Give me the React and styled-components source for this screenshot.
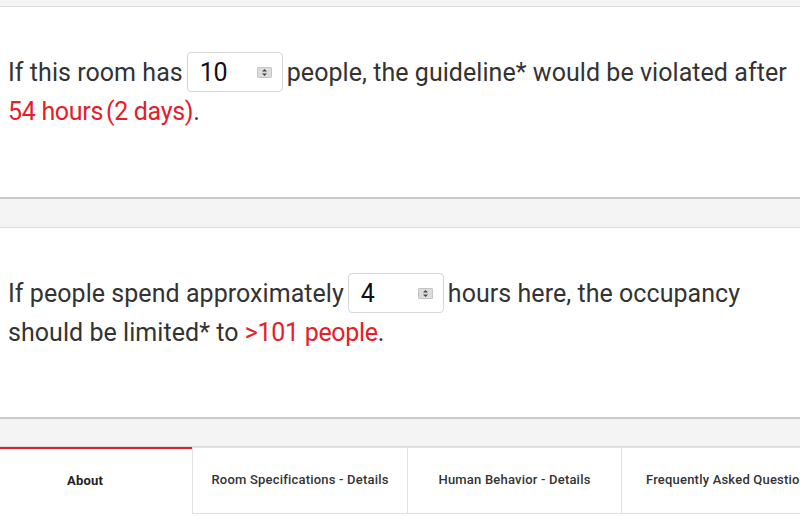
import React from "react";
import styled, { createGlobalStyle } from "styled-components";

const Global = createGlobalStyle`
  html, body { margin: 0; padding: 0; background: #fff; }
  body { font-family: Roboto, "Noto Sans", sans-serif; color: #333; overflow: hidden; }
`;

const Page = styled.div`
  width: 800px;
  height: 519px;
  display: flex;
  flex-direction: column;
  overflow: hidden;
`;

const Strip = styled.div`
  height: ${(p) => p.$h}px;
  background: #f4f4f4;
  border-top: ${(p) => (p.$top ? "2px solid #c9c9c9" : "none")};
  border-bottom: 1px solid #dcdcdc;
  flex-shrink: 0;
`;

const Panel = styled.section`
  height: ${(p) => p.$h}px;
  background: #fff;
  padding: 46px 0 0 8px;
  box-sizing: border-box;
  flex-shrink: 0;
`;

const Sentence = styled.p`
  margin: 0;
  font-size: 25px;
  line-height: 39px;
  letter-spacing: 0.05px;
  color: #333;
  width: 790px;
`;

const Red = styled.span`
  color: #e3202a;
  letter-spacing: -0.3px;
`;

const NumberBox = styled.span`
  display: inline-flex;
  align-items: center;
  justify-content: space-between;
  box-sizing: border-box;
  width: 96px;
  height: 40px;
  vertical-align: middle;
  margin: -4px 4px 0 4px;
  padding: 0 10px 0 12px;
  border: 1px solid #d6d6d6;
  border-radius: 4px;
  color: #111;
  font-size: 25px;
  letter-spacing: -0.2px;
`;

const Spinner = () => (
  <svg width="15" height="11" viewBox="0 0 15 11">
    <rect x="0" y="0" width="15" height="11" rx="1" fill="#dcdcdc" />
    <rect x="0.5" y="0.5" width="14" height="10" rx="1" fill="none" stroke="#c4c4c4" />
    <path d="M5 4.5 L7.5 2 L10 4.5 Z" fill="#444" />
    <path d="M5 6.5 L7.5 9 L10 6.5 Z" fill="#444" />
  </svg>
);

const Tabs = styled.nav`
  display: flex;
  height: 67px;
  flex-shrink: 0;
`;

const Tab = styled.div`
  flex: 0 0 ${(p) => p.$w}px;
  box-sizing: border-box;
  display: flex;
  align-items: center;
  white-space: nowrap;
  overflow: hidden;
  font-size: 13px;
  letter-spacing: 0.2px;
  font-weight: ${(p) => (p.$active ? 700 : 500)};
  color: ${(p) => (p.$active ? "#222" : "#333")};
  border-top: ${(p) => (p.$active ? "2px solid #e3202a" : "1px solid #e2e2e2")};
  border-left: ${(p) => (p.$active ? "none" : "1px solid #e2e2e2")};
  border-bottom: ${(p) => (p.$active ? "none" : "1px solid #e2e2e2")};
  padding-bottom: 3px;
  justify-content: ${(p) => (p.$left ? "flex-start" : "center")};
  padding-left: ${(p) => (p.$left ? 24 : 0)}px;
  padding-right: ${(p) => (p.$active ? 22 : 0)}px;
`;

export default function App() {
  return (
    <Page>
      <Global />
      <Strip $h={6} />
      <Panel $h={190}>
        <Sentence>
          If this room has
          <NumberBox>
            10
            <Spinner />
          </NumberBox>
          people, the guideline* would be violated after <Red>54 hours{"\u202F"}(2 days)</Red>.
        </Sentence>
      </Panel>
      <Strip $h={28} $top />
      <Panel $h={189}>
        <Sentence>
          If people spend approximately
          <NumberBox>
            4
            <Spinner />
          </NumberBox>
          hours here, the occupancy should be limited* to <Red>&gt;101 people</Red>.
        </Sentence>
      </Panel>
      <Strip $h={27} $top />
      <Tabs>
        <Tab $w={192} $active>About</Tab>
        <Tab $w={215}>Room Specifications - Details</Tab>
        <Tab $w={214}>Human Behavior - Details</Tab>
        <Tab $w={200} $left>Frequently Asked Questions</Tab>
      </Tabs>
    </Page>
  );
}
